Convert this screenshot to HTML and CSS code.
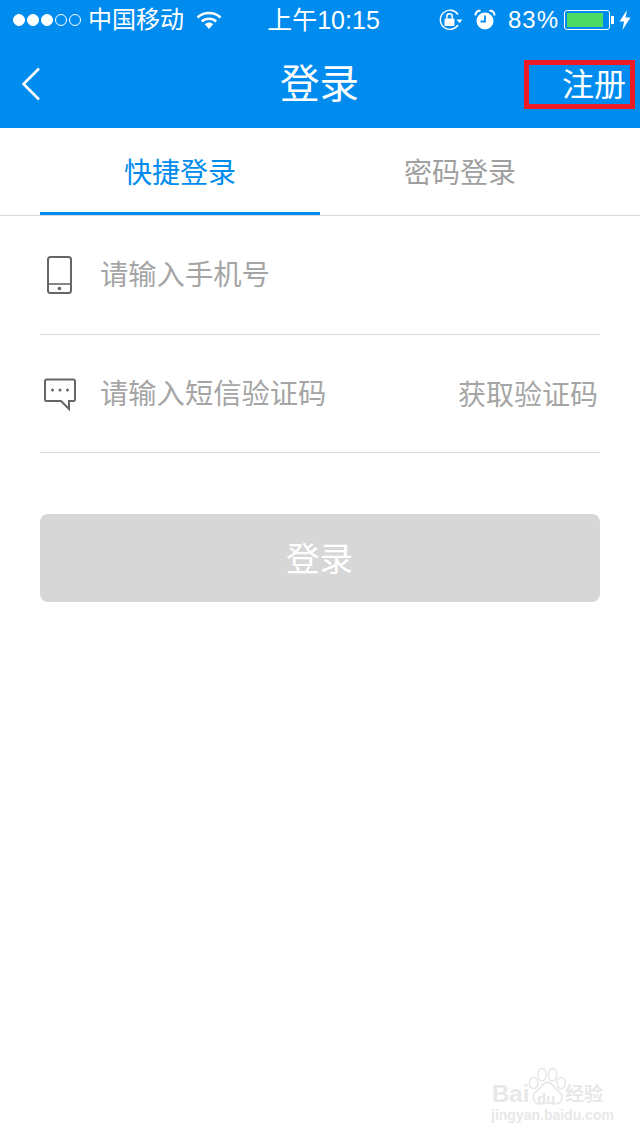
FILE: index.html
```html
<!DOCTYPE html>
<html>

<head>
  <title>登录</title>
  <link rel="stylesheet" href="styles.css">
</head>

<body>
  <header class="top">
    <div class="status">
      <div class="status-left">
        <span class="dots">
          <i class="dot on"></i><i class="dot on"></i><i class="dot on"></i><i class="dot"></i><i class="dot"></i>
        </span>
        <span class="carrier">中国移动</span>
        <svg class="wifi" width="26" height="20" viewBox="0 0 26 20">
          <path d="M1.5 7.5C7.8 1.5 18.2 1.5 24.5 7.5" fill="none" stroke="#fff" stroke-width="2.6" />
          <path d="M5.8 11.5C9.8 7.8 16.2 7.8 20.2 11.5" fill="none" stroke="#fff" stroke-width="2.6" />
          <path d="M8.8 14.2C11.2 12 14.8 12 17.2 14.2L13 19Z" fill="#fff" />
        </svg>
      </div>
      <div class="clock">上午10:15</div>
      <div class="status-right">
        <svg class="lock" width="24" height="22" viewBox="0 0 24 22">
          <path d="M19 5.5A9.6 9.6 0 1 0 19 16" fill="none" stroke="#fff" stroke-width="1.4" />
          <path d="M17.5 10.5H23.5L20.5 14Z" fill="#fff" />
          <rect x="5.5" y="9.5" width="10" height="7.5" rx="1" fill="#fff" />
          <path d="M7.8 9.5V7.5A2.7 2.7 0 0 1 13.2 7.5V9.5" fill="none" stroke="#fff" stroke-width="1.5" />
        </svg>
        <svg class="alarm" width="22" height="22" viewBox="0 0 22 22">
          <circle cx="11" cy="12" r="8.5" fill="#fff" />
          <path d="M11 6.5V12.5H6.5" fill="none" stroke="#008cee" stroke-width="1.8" />
          <path d="M1.5 6.5A4 4 0 0 1 6.5 2M15.5 2A4 4 0 0 1 20.5 6.5" fill="none" stroke="#fff" stroke-width="2" />
        </svg>
        <span class="percent">83%</span>
        <div class="battery">
          <div class="battery-fill"></div>
        </div>
        <div class="battery-cap"></div>
        <svg class="bolt" width="12" height="20" viewBox="0 0 12 20">
          <path d="M8 0L0.5 11.5H5L3.5 20L11.5 7.5H6.5Z" fill="#fff" />
        </svg>
      </div>
    </div>
    <nav class="nav">
      <svg class="back" width="22" height="36" viewBox="0 0 22 36">
        <path d="M19 2.5L3.5 18L19 33.5" fill="none" stroke="#fff" stroke-width="2.6" />
      </svg>
      <h1 class="title">登录</h1>
      <a class="register">注册</a>
      <div class="red-box"></div>
    </nav>
  </header>

  <div class="tabs">
    <div class="tab active">快捷登录</div>
    <div class="tab">密码登录</div>
  </div>

  <form class="form">
    <div class="row row-phone">
      <svg class="icon" width="25" height="38" viewBox="0 0 25 38">
        <rect x="1" y="1" width="23" height="36" rx="2.5" fill="none" stroke="#666" stroke-width="2" />
        <path d="M1 28H24" stroke="#666" stroke-width="1.6" />
        <circle cx="12.500" cy="32.500" r="1.800" fill="#666" />
      </svg>
      <span class="hint">请输入手机号</span>
    </div>
    <div class="row row-code">
      <svg class="icon" width="32" height="33" viewBox="0 0 32 33">
        <path d="M2.500 1.500H29.500A1.500 1.500 0 0 1 31 3V21.500A1.500 1.500 0 0 1 29.500 23H25V31L17 23H2.500A1.500 1.500 0 0 1 1 21.500V3A1.500 1.500 0 0 1 2.500 1.500Z" fill="none" stroke="#666" stroke-width="2" />
        <circle cx="8.500" cy="12" r="1.500" fill="#666" />
        <circle cx="16" cy="12" r="1.500" fill="#666" />
        <circle cx="23.500" cy="12" r="1.500" fill="#666" />
      </svg>
      <span class="hint">请输入短信验证码</span>
      <span class="get-code">获取验证码</span>
    </div>
    <button type="button" class="login">登录</button>
  </form>

  <div class="mark">
    <svg class="paw" width="38" height="39" viewBox="0 0 54 54">
      <g fill="#fff" stroke="#e6e6e6" stroke-width="2">
        <ellipse cx="8" cy="22" rx="6" ry="8" />
        <ellipse cx="20" cy="10" rx="6" ry="9" />
        <ellipse cx="35" cy="10" rx="6" ry="9" />
        <ellipse cx="47" cy="22" rx="6" ry="8" />
        <path d="M28 21C20 21 20 29 11 35C4 41 8 52 18 52C24 52 25 50 28 50C31 50 34 52 38 52C48 52 51 41 45 35C36 29 36 21 28 21Z" />
      </g>
    </svg>
    <span class="mark-bai">Bai</span>
    <span class="mark-du">du</span>
    <span class="mark-cn">经验</span>
    <span class="mark-url">jingyan.baidu.com</span>
  </div>
</body>

</html>
```

FILE: styles.css
```css
html,
body {
  margin: 0;
  padding: 0;
}

body {
  position: relative;
  width: 640px;
  height: 1136px;
  overflow: hidden;
  background-color: #fff;
  font-family: "Liberation Sans", "Noto Sans CJK SC", sans-serif;
}

.top {
  background-color: #008cee;
  color: #fff;
}

.status {
  display: flex;
  align-items: center;
  justify-content: space-between;
  height: 40px;
  padding: 0 9px 0 13px;
}

.status-left,
.status-right {
  display: flex;
  align-items: center;
  width: 213px;
}

.status-right {
  justify-content: flex-end;
}

.dots {
  display: flex;
  gap: 2px;
}

.dot {
  box-sizing: border-box;
  width: 12px;
  height: 12px;
  border: 1px solid #fff;
  border-radius: 50%;
}

.dot.on {
  background-color: #fff;
}

.carrier {
  margin-left: 7px;
  font-size: 24px;
  line-height: 42px;
}

.wifi {
  margin-left: 12px;
}

.clock {
  margin-left: 3px;
  font-size: 25px;
  line-height: 42px;
  white-space: nowrap;
}

.alarm {
  margin-left: 11px;
}

.percent {
  margin-left: 12px;
  font-size: 24px;
  letter-spacing: 1px;
  line-height: 42px;
}

.battery {
  box-sizing: border-box;
  width: 46px;
  height: 20px;
  margin-left: 5px;
  padding: 2px;
  border: 1px solid #fff;
  border-radius: 3px;
}

.battery-fill {
  width: 36px;
  height: 14px;
  background-color: #4cd964;
}

.battery-cap {
  width: 3px;
  height: 8px;
  margin-left: 1px;
  background-color: #fff;
}

.bolt {
  margin-left: 5px;
}

.nav {
  position: relative;
  display: flex;
  align-items: center;
  justify-content: center;
  height: 88px;
}

.back {
  position: absolute;
  left: 20px;
  top: 26px;
}

.title {
  margin: 0 1px 0 0;
  font-size: 39.500px;
  font-weight: normal;
  line-height: 86px;
}

.register {
  position: absolute;
  right: 14px;
  top: 25px;
  font-size: 32px;
  line-height: 40px;
}

.red-box {
  position: absolute;
  left: 524px;
  top: 20px;
  box-sizing: border-box;
  width: 111px;
  height: 49px;
  border: 5px solid #ed1c24;
}

.tabs {
  display: flex;
  height: 88px;
  box-sizing: border-box;
  padding: 0 0 0 40px;
  border-bottom: 1px solid #d9d9d9;
}

.tab {
  width: 280px;
  height: 87px;
  box-sizing: border-box;
  font-size: 28px;
  line-height: 91px;
  text-align: center;
  color: #a0a0a0;
}

.tab.active {
  color: #008cee;
  border-bottom: 3px solid #008cee;
}

.form {
  padding: 0 40px;
}

.row {
  position: relative;
  display: flex;
  align-items: center;
  box-sizing: border-box;
  border-bottom: 1px solid #d9d9d9;
}

.row-phone {
  height: 119px;
  padding-bottom: 1px;
}

.row-code {
  height: 118px;
}

.row-phone .icon {
  margin: 1px 29px 0 7px;
}

.row-code .icon {
  margin: 1px 25px 0 4px;
}

.hint {
  margin-left: -1px;
  font-size: 28.300px;
  line-height: 40px;
  color: #a5a5a5;
}

.get-code {
  margin-left: auto;
  margin-right: 2px;
  font-size: 28px;
  line-height: 40px;
  color: #a5a5a5;
  position: relative;
  top: 2px;
}

.login {
  display: block;
  width: 560px;
  height: 88px;
  margin-top: 61px;
  padding: 0 1px 3px 0;
  border: none;
  border-radius: 8px;
  background-color: #d7d7d7;
  color: #fff;
  font-family: inherit;
  font-size: 33.500px;
}

.mark {
  position: absolute;
  left: 490px;
  top: 1066px;
  width: 116px;
  height: 60px;
  color: #e8e8e8;
  font-weight: bold;
  white-space: nowrap;
}

.paw {
  position: absolute;
  left: 38px;
  top: 1px;
}

.mark-bai {
  position: absolute;
  left: 2px;
  top: 14px;
  font-size: 24px;
  line-height: 28px;
}

.mark-du {
  position: absolute;
  left: 47px;
  top: 25px;
  font-size: 15px;
  line-height: 16px;
}

.mark-cn {
  position: absolute;
  left: 75px;
  top: 17px;
  font-size: 19px;
  line-height: 24px;
}

.mark-url {
  position: absolute;
  left: 1px;
  top: 41px;
  font-size: 14px;
  line-height: 16px;
}
```
